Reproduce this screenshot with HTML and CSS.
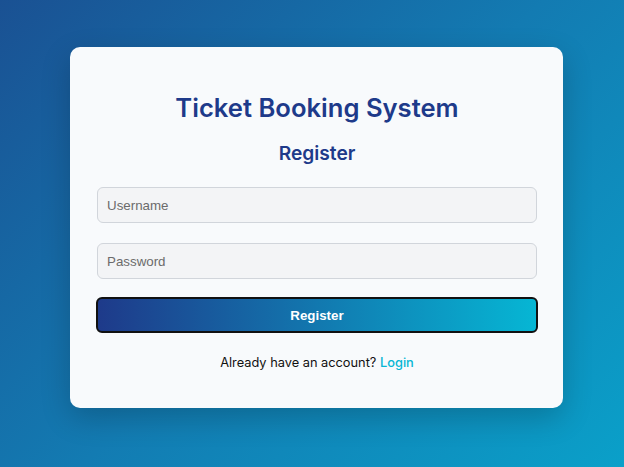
FILE: index.html
```html
<!DOCTYPE html>
<html lang="en">
<head>
<meta charset="utf-8">
<title>Ticket Booking System</title>
<link rel="stylesheet" href="styles.css">
</head>
<body>
<main class="page">
  <section class="card">
    <h1 class="title">Ticket Booking System</h1>
    <h2 class="subtitle">Register</h2>
    <form class="form">
      <input class="field" type="text" placeholder="Username">
      <input class="field field-last" type="password" placeholder="Password">
      <button class="btn" type="button">Register</button>
    </form>
    <p class="switch">Already have an account? <a class="link" href="#">Login</a></p>
  </section>
</main>
</body>
</html>
```

FILE: styles.css
```css
* { box-sizing: border-box; }
html, body { margin: 0; height: 100%; }
body {
  font-family: Inter, "Liberation Sans", sans-serif;
  background: linear-gradient(135deg, #1a5193 0%, #137bb2 50%, #0aa0c9 100%);
}
.page {
  min-height: 100%;
  display: flex;
  justify-content: center;
  padding: 47px 0 0 9px;
}
.card {
  width: 493px;
  height: 361px;
  background: #f8fafc;
  border-radius: 10px;
  box-shadow: 0 10px 30px rgba(0, 0, 0, 0.2);
  padding: 45px 25px 0 26px;
  text-align: center;
}
.title {
  margin: 0;
  font-size: 25.6px;
  font-weight: 600;
  line-height: 31px;
  color: #1e3a8a;
}
.subtitle {
  margin: 18px 0 0;
  font-size: 19.2px;
  font-weight: 600;
  line-height: 24px;
  color: #1e3a8a;
}
.form {
  margin-top: 22px;
  display: flex;
  flex-direction: column;
  gap: 20px;
}
.field {
  height: 36px;
  margin: 0 1px;
  border: 1px solid #d1d5db;
  border-radius: 6px;
  background: #f3f4f6;
  padding: 0 9px;
  font-family: "Liberation Sans", Arial, sans-serif;
  font-size: 13.333px;
  color: #111;
}
.field-last { margin-bottom: -2px; }
.field::placeholder { color: #6b6b6b; }
.btn {
  height: 36px;
  width: 100%;
  border: 2px solid #111;
  border-radius: 6px;
  background: linear-gradient(90deg, #1e3a8a, #06b6d4);
  color: #fff;
  font-family: "Liberation Sans", Arial, sans-serif;
  font-size: 13.333px;
  font-weight: 700;
}
.switch {
  margin: 21px 0 0;
  font-size: 12.8px;
  line-height: 17px;
  color: #111;
}
.link {
  color: #06b6d4;
  font-weight: 500;
  text-decoration: none;
}
```
